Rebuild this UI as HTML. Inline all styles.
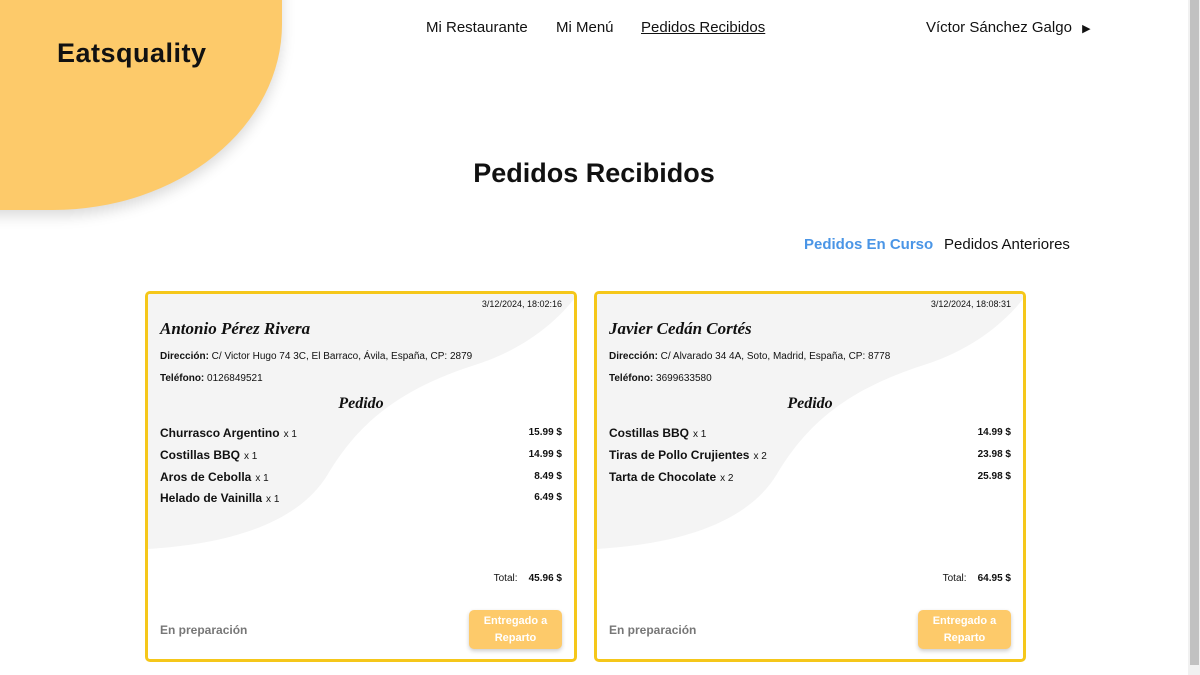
<!DOCTYPE html>
<html><head><meta charset="utf-8">
<style>
*{margin:0;padding:0;box-sizing:border-box}
body{width:1200px;height:675px;overflow:hidden;background:#fff;font-family:"Liberation Sans",sans-serif;color:#111;position:relative}
.blob{position:absolute;left:-100px;top:-100px;width:382px;height:310px;background:#fdca6a;border-bottom-right-radius:60% 60%;box-shadow:0 6px 14px rgba(0,0,0,.15)}
.logo{position:absolute;left:57px;top:38px;font-size:27px;font-weight:bold;letter-spacing:.5px}
.nav{position:absolute;top:19px;font-size:15px}
.sb{position:absolute;right:0;top:0;width:12px;height:675px;background:#f1f1f1}
.sb div{position:absolute;left:2px;top:0;width:9px;height:665px;background:#c1c1c1}
h1{position:absolute;top:158px;left:0;width:1188px;text-align:center;font-size:27px;font-weight:bold}
.tab{position:absolute;top:236px;font-size:15px}
.card{position:absolute;top:291px;width:432px;height:371px;border:3px solid #f5c71a;border-radius:5px;overflow:hidden;background:#fff}
.card svg{position:absolute;left:0;top:0}
.in{position:absolute;left:0;top:0;width:100%;height:100%;padding:0 12px}
.date{position:absolute;right:12px;top:5px;font-size:9px}
.name{position:absolute;left:12px;top:25px;font-family:"Liberation Serif",serif;font-style:italic;font-weight:bold;font-size:17px}
.l{position:absolute;left:12px;font-size:10px}
.ped{position:absolute;left:0;width:100%;top:101px;text-align:center;font-family:"Liberation Serif",serif;font-style:italic;font-weight:bold;font-size:16px}
.it{position:absolute;left:12px;right:12px;font-size:12px;font-weight:bold}
.it span.q{font-weight:normal;font-size:10px;margin-left:4px}
.it .p{position:absolute;right:0;top:1px;font-size:10px}
.tot{position:absolute;right:12px;top:279px;font-size:10px}
.st{position:absolute;left:12px;top:329px;font-size:12px;font-weight:bold;color:#777}
.btn{position:absolute;right:12px;top:316px;width:93px;height:39px;background:#fdca6a;border-radius:5px;color:#fff;font-size:11px;font-weight:bold;text-align:center;line-height:17px;padding-top:3px;box-shadow:0 2px 4px rgba(0,0,0,.2)}
</style></head><body>
<div class="blob"></div>
<div class="logo">Eatsquality</div>
<div class="nav" style="left:426px">Mi Restaurante</div>
<div class="nav" style="left:556px">Mi Menú</div>
<div class="nav" style="left:641px;text-decoration:underline">Pedidos Recibidos</div>
<div class="nav" style="left:926px">Víctor Sánchez Galgo <span style="font-size:11px;margin-left:6px">&#9654;</span></div>
<h1>Pedidos Recibidos</h1>
<div class="tab" style="left:804px;color:#4a95e6;font-weight:bold">Pedidos En Curso</div>
<div class="tab" style="left:944px">Pedidos Anteriores</div>

<div class="card" style="left:145px">
<svg width="432" height="371"><path d="M0 0 H430 C400 40 360 60 330 70 C250 95 210 130 180 180 C150 230 80 250 0 255 Z" fill="#f4f4f4"/></svg>
<div class="in">
<div class="date">3/12/2024, 18:02:16</div>
<div class="name">Antonio Pérez Rivera</div>
<div class="l" style="top:57px"><b>Dirección:</b> C/ Victor Hugo 74 3C, El Barraco, Ávila, España, CP: 2879</div>
<div class="l" style="top:79px"><b>Teléfono:</b> 0126849521</div>
<div class="ped">Pedido</div>
<div class="it" style="top:132px">Churrasco Argentino<span class="q">x 1</span><span class="p">15.99 $</span></div>
<div class="it" style="top:154px">Costillas BBQ<span class="q">x 1</span><span class="p">14.99 $</span></div>
<div class="it" style="top:176px">Aros de Cebolla<span class="q">x 1</span><span class="p">8.49 $</span></div>
<div class="it" style="top:197px">Helado de Vainilla<span class="q">x 1</span><span class="p">6.49 $</span></div>
<div class="tot">Total: &nbsp;&nbsp; <b>45.96 $</b></div>
<div class="st">En preparación</div>
<div class="btn">Entregado a<br>Reparto</div>
</div></div>

<div class="card" style="left:594px">
<svg width="432" height="371"><path d="M0 0 H430 C400 40 360 60 330 70 C250 95 210 130 180 180 C150 230 80 250 0 255 Z" fill="#f4f4f4"/></svg>
<div class="in">
<div class="date">3/12/2024, 18:08:31</div>
<div class="name">Javier Cedán Cortés</div>
<div class="l" style="top:57px"><b>Dirección:</b> C/ Alvarado 34 4A, Soto, Madrid, España, CP: 8778</div>
<div class="l" style="top:79px"><b>Teléfono:</b> 3699633580</div>
<div class="ped">Pedido</div>
<div class="it" style="top:132px">Costillas BBQ<span class="q">x 1</span><span class="p">14.99 $</span></div>
<div class="it" style="top:154px">Tiras de Pollo Crujientes<span class="q">x 2</span><span class="p">23.98 $</span></div>
<div class="it" style="top:176px">Tarta de Chocolate<span class="q">x 2</span><span class="p">25.98 $</span></div>
<div class="tot">Total: &nbsp;&nbsp; <b>64.95 $</b></div>
<div class="st">En preparación</div>
<div class="btn">Entregado a<br>Reparto</div>
</div></div>
<div class="sb"><div></div></div>
</body></html>
